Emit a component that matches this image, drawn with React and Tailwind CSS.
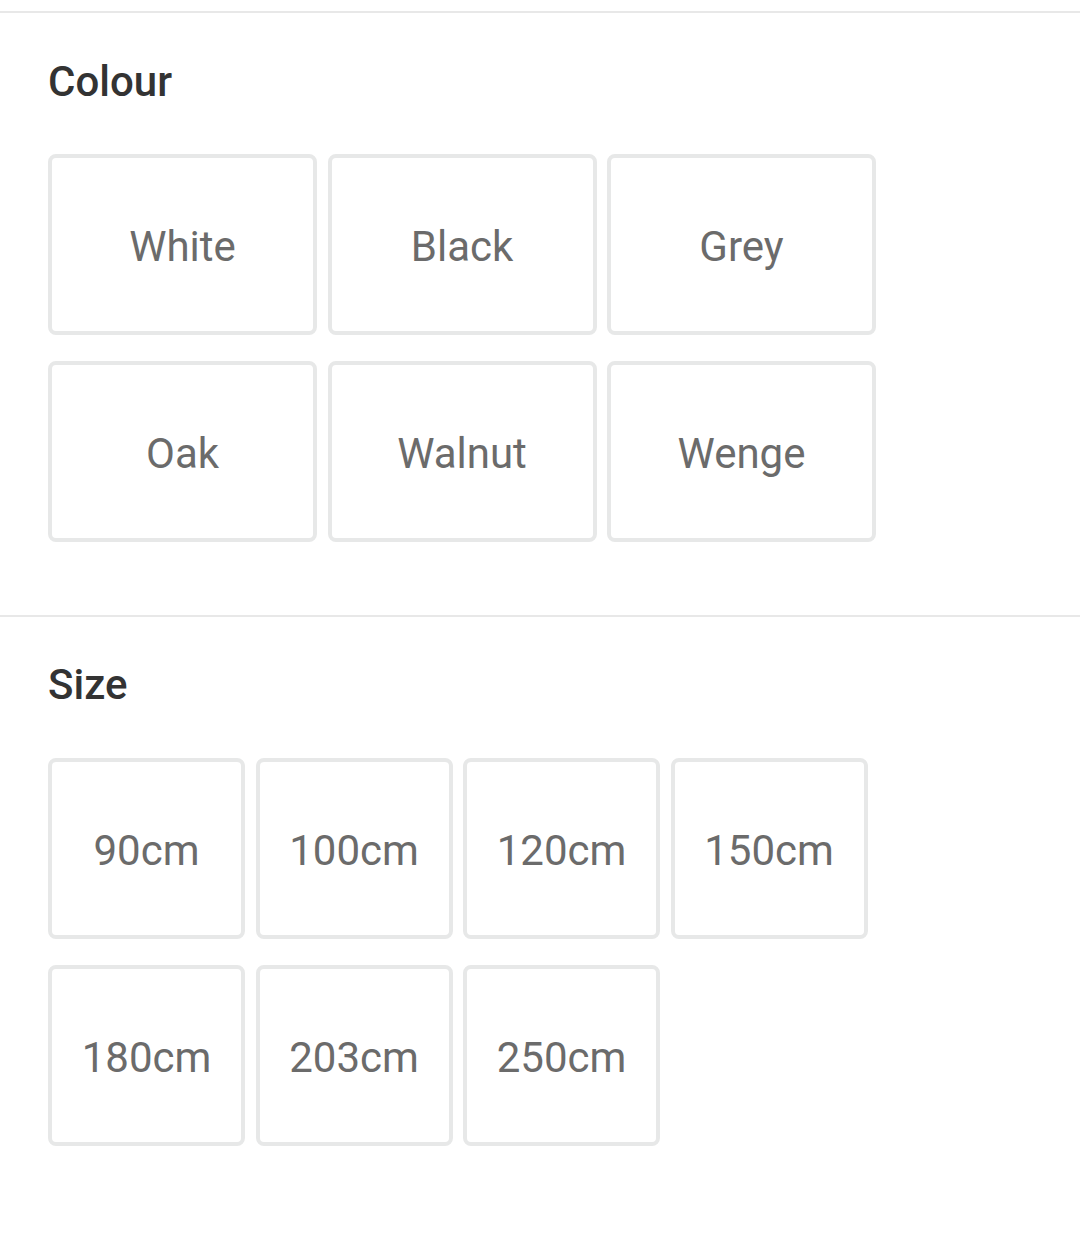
const colours = ['White', 'Black', 'Grey', 'Oak', 'Walnut', 'Wenge']
const sizes = ['90cm', '100cm', '120cm', '150cm', '180cm', '203cm', '250cm']

function Option({ label, width }) {
  return (
    <button
      className={`${width} h-[181px] pt-1 flex items-center justify-center rounded-[8px] border-4 border-[#e7e8e8] bg-white text-[42px] text-[#6b6b6b]`}
    >
      {label}
    </button>
  )
}

function App() {
  return (
    <div className="min-h-screen bg-white font-['Roboto',sans-serif]">
      <div className="mt-[11px] border-t-2 border-[#e8e8e8]">
        {/* Colour */}
        <section className="px-12 pt-[45px] pb-[73px]">
          <h2 className="text-[42px] leading-[48px] font-medium text-[#333]">Colour</h2>
          <div className="mt-[48px] grid grid-cols-[repeat(3,269px)] gap-x-[10.5px] gap-y-[26px]">
            {colours.map((c) => (
              <Option key={c} label={c} width="w-[269px]" />
            ))}
          </div>
        </section>

        {/* Size */}
        <section className="border-t-2 border-[#e8e8e8] px-12 pt-[44px] pb-[60px]">
          <h2 className="text-[42px] leading-[48px] font-medium text-[#333]">Size</h2>
          <div className="mt-[49px] grid grid-cols-[repeat(4,197px)] gap-x-[10.5px] gap-y-[26px]">
            {sizes.map((s) => (
              <Option key={s} label={s} width="w-[197px]" />
            ))}
          </div>
        </section>
      </div>
    </div>
  )
}

export default App
